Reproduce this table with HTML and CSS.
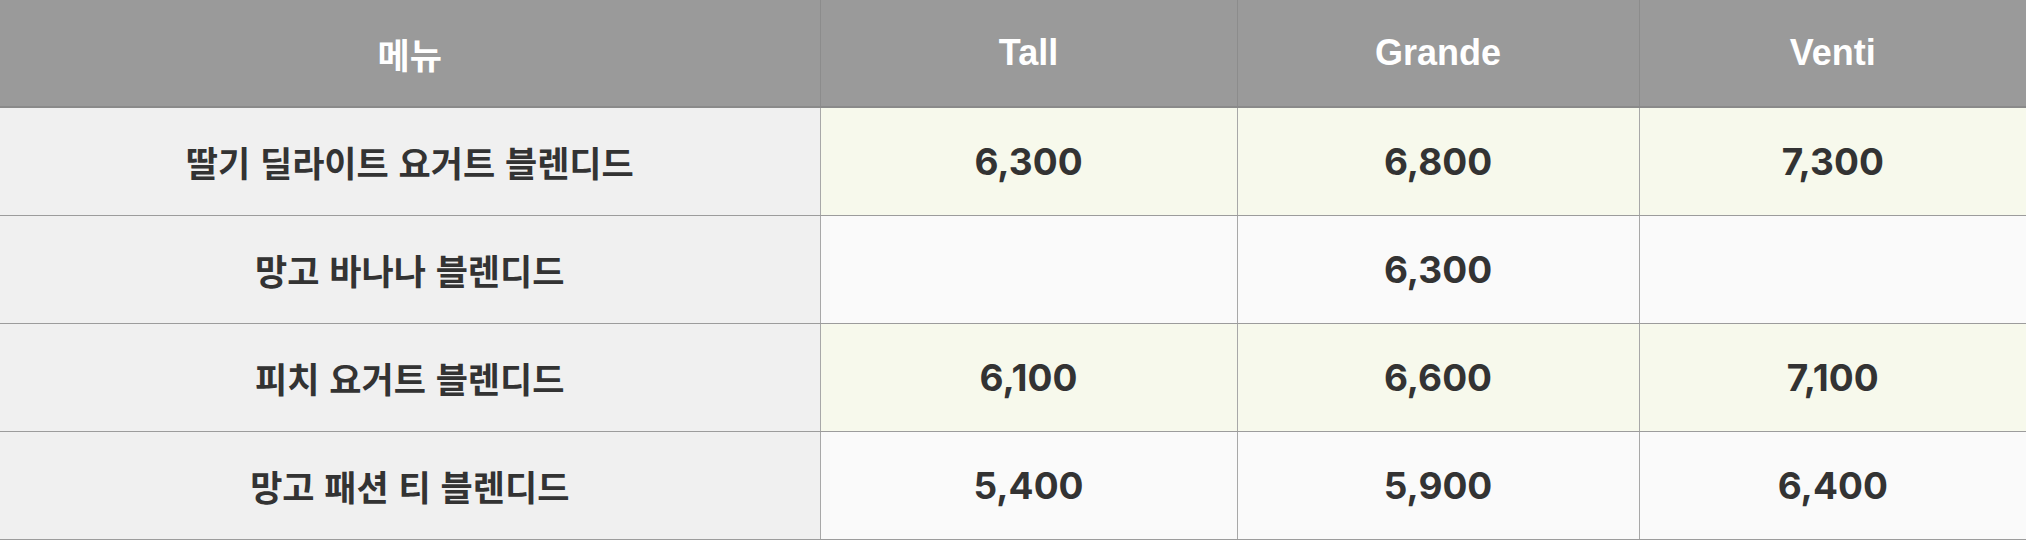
FILE: index.html
```html
<!DOCTYPE html>
<html lang="ko">
<head>
<meta charset="utf-8">
<title>블렌디드 가격표</title>
<link rel="stylesheet" href="styles.css">
</head>
<body>
<table class="price-table">
  <colgroup>
    <col class="col-menu">
    <col class="col-tall">
    <col class="col-grande">
    <col class="col-venti">
  </colgroup>
  <thead>
    <tr>
      <th class="head-ko">메뉴</th>
      <th>Tall</th>
      <th>Grande</th>
      <th>Venti</th>
    </tr>
  </thead>
  <tbody>
    <tr class="row-odd">
      <td class="menu">딸기 딜라이트 요거트 블렌디드</td>
      <td class="price">6,300</td>
      <td class="price">6,800</td>
      <td class="price">7,300</td>
    </tr>
    <tr class="row-even">
      <td class="menu">망고 바나나 블렌디드</td>
      <td class="price"></td>
      <td class="price">6,300</td>
      <td class="price"></td>
    </tr>
    <tr class="row-odd">
      <td class="menu">피치 요거트 블렌디드</td>
      <td class="price">6,100</td>
      <td class="price">6,600</td>
      <td class="price">7,100</td>
    </tr>
    <tr class="row-even">
      <td class="menu">망고 패션 티 블렌디드</td>
      <td class="price">5,400</td>
      <td class="price">5,900</td>
      <td class="price">6,400</td>
    </tr>
  </tbody>
</table>
</body>
</html>
```

FILE: styles.css
```css
html, body {
  margin: 0;
  padding: 0;
  background: #fafafa;
}

.price-table {
  width: 2026px;
  border-collapse: collapse;
  table-layout: fixed;
  color: #333333;
}

.col-menu { width: 820px; }
.col-tall { width: 417px; }
.col-grande { width: 402px; }
.col-venti { width: 387px; }

.price-table th {
  height: 106px;
  padding: 0;
  background: #9a9a9a;
  color: #ffffff;
  font-family: "Liberation Sans", Arial, sans-serif;
  font-weight: 700;
  font-size: 36px;
  text-align: center;
  vertical-align: middle;
  border-left: 1px solid #8c8c8c;
  border-bottom: 2px solid #8a8a8a;
}

.price-table th:first-child {
  border-left: none;
}

.price-table th.head-ko {
  font-family: "Noto Sans CJK KR", sans-serif;
  font-size: 35px;
}

.price-table td {
  height: 107px;
  padding: 0;
  text-align: center;
  vertical-align: middle;
  border-left: 1px solid #a8a8a8;
  border-bottom: 1px solid #9c9c9c;
  font-weight: 700;
}

.price-table td:first-child {
  border-left: none;
}

.menu {
  background: #f0f0f0;
  font-family: "Noto Sans CJK KR", sans-serif;
  font-size: 35px;
}

.price {
  font-family: Inter, "Noto Sans CJK KR", sans-serif;
  font-size: 37px;
}

.row-odd .price {
  background: #f7f9ec;
}

.row-even .price {
  background: #fafafa;
}
```
